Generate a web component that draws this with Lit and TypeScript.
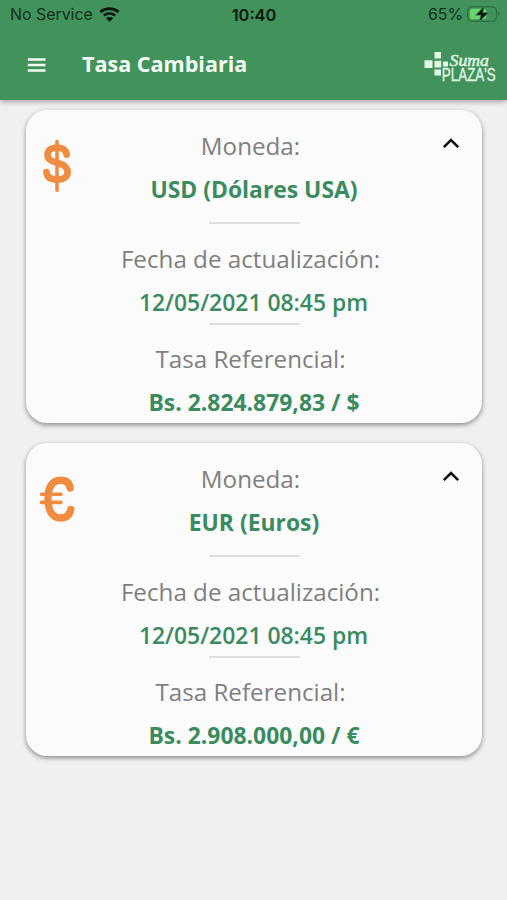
import { LitElement, html, css, svg } from "lit";
import { customElement, property } from "lit/decorators.js";

interface Rate {
  icon: "usd" | "eur";
  currency: string;
  updated: string;
  rate: string;
}

const RATES: Rate[] = [
  { icon: "usd", currency: "USD (Dólares USA)", updated: "12/05/2021 08:45 pm", rate: "Bs. 2.824.879,83 / $" },
  { icon: "eur", currency: "EUR (Euros)", updated: "12/05/2021 08:45 pm", rate: "Bs. 2.908.000,00 / €" },
];

const usdIcon = svg`
  <path d="M18 2.5V51.200" stroke-width="3.600" />
  <path d="M27.700 15.700C27.200 11 23.500 8.600 18.200 8.600C12.200 8.600 8.500 11.400 8.500 15.600C8.500 20.300 12 22 18.200 23.700C24.600 25.400 28.700 27.600 28.700 33C28.700 38 24.400 40.600 18.200 40.600C11.900 40.600 8 38 7.400 33" stroke-width="6.600" />`;
const eurIcon = svg`
  <path d="M31.200 16C30.400 11 27 8.200 21.600 8.200C12.600 8.200 9 16 9 26.800C9 37.600 12.600 46 21.600 46C27.600 46 30.800 42.600 31.800 37.400" stroke-width="7.400" />
  <path d="M2.500 22.300H22M2.500 30.400H22" stroke-width="3.600" />`;

@customElement("status-bar")
export class StatusBar extends LitElement {
  static styles = css`
    :host {
      display: grid;
      grid-template-columns: 1fr auto 1fr;
      align-items: center;
      height: 30px;
      padding: 0 7px 0 10px;
      box-sizing: border-box;
      font: 400 16px/30px Inter, sans-serif;
      color: #10301c;
    }
    .side { display: flex; align-items: center; }
    .left { gap: 6px; }
    .right { justify-content: flex-end; gap: 4px; }
    .carrier { font-size: 15.900px; }
    .time { font-size: 16.400px; font-weight: 600; color: #07170d; margin-left: -2px; }
    .level { font-size: 15.900px; }
    svg { display: block; }
    .wifi { margin-top: -2px; }
    .battery { margin-top: -2px; }
  `;
  render() {
    return html`
      <div class="side left">
        <span class="carrier">No Service</span>
        <svg class="wifi" width="21" height="16" viewBox="0 0 21 16">
          <g fill="none" stroke="#06140b" stroke-width="2.7">
            <path d="M1.400 5.900C6.500 1.400 14.500 1.400 19.600 5.900" />
            <path d="M4.900 9.500C8.200 6.800 12.800 6.800 16.100 9.500" />
          </g>
          <path d="M10.500 15.800L7 12.300C8.900 10.700 12.100 10.700 14 12.300Z" fill="#06140b" />
        </svg>
      </div>
      <span class="time">10:40</span>
      <div class="side right">
        <span class="level">65%</span>
        <svg class="battery" width="33" height="18" viewBox="0 0 33 18">
          <rect x=".7" y="1.700" width="28.800" height="14.600" rx="4.400" fill="none" stroke="#2f7045" stroke-width="1.400" />
          <rect x="2.800" y="3.800" width="16.500" height="10.400" rx="2.500" fill="#67d46a" />
          <path d="M31 6.500C33 7.200 33 10.800 31 11.500Z" fill="#2f7045" />
          <path d="M17.500 1L8.500 10.200H14L12 17L21.500 7.600H15.700Z" fill="#06140b" stroke="#42925b" stroke-width=".7" />
        </svg>
      </div>
    `;
  }
}

@customElement("app-bar")
export class AppBar extends LitElement {
  static styles = css`
    :host {
      display: flex;
      align-items: center;
      height: 70px;
      padding: 0 9px 0 27px;
      box-sizing: border-box;
      color: #f4fcf5;
      font-family: "Open Sans", "Noto Sans", sans-serif;
    }
    svg { display: block; }
    .menu { margin-top: -1px; }
    .title {
      flex: 1;
      margin: -2px 0 0 36px;
      font-size: 21.550px;
      font-weight: 700;
      line-height: 30px;
    }
    .logo { margin-top: 5px; overflow: visible; }
    .suma { font: italic 400 17px "Liberation Serif", serif; }
    .plazas { font: 400 18px "Liberation Sans", sans-serif; }
  `;
  render() {
    return html`
      <svg class="menu" width="19" height="16" viewBox="0 0 19 16">
        <path d="M.800 2.500H18.500M.800 8H18.500M.800 13.500H18.500" stroke="#f4fcf5" stroke-width="2.500" />
      </svg>
      <h1 class="title">Tasa Cambiaria</h1>
      <svg class="logo" width="74" height="36" viewBox="0 0 74 36" fill="#e2f9e8">
        <rect x="10.500" y="2" width="6.500" height="6.500" />
        <rect x=".500" y="10.300" width="8" height="7.700" />
        <rect x="10.500" y="10.800" width="6.700" height="6.700" />
        <rect x="19" y="11.500" width="5" height="5" />
        <rect x="10.500" y="19.500" width="6.500" height="6" />
        <text class="suma" x="25.500" y="16.300" stroke="#e2f9e8" stroke-width=".45" textLength="39.500" lengthAdjust="spacingAndGlyphs">Suma</text>
        <text class="plazas" x="17.800" y="31.300" stroke="#e2f9e8" stroke-width=".3" textLength="54" lengthAdjust="spacingAndGlyphs">PLAZA'S</text>
      </svg>
    `;
  }
}

@customElement("rate-card")
export class RateCard extends LitElement {
  @property({ attribute: false }) rate!: Rate;
  static styles = css`
    :host {
      display: grid;
      grid-template-columns: 62px 1fr 62px;
      height: 312.600px;
      box-sizing: border-box;
      border-radius: 21px;
      background: #fbfbfb;
      box-shadow: 0 2px 5px rgba(0, 0, 0, 0.42);
      font-family: "Open Sans", "Noto Sans", sans-serif;
    }
    svg { display: block; fill: none; stroke-linecap: round; stroke-linejoin: round; }
    .currency { margin: 29px 0 0 13px; stroke: #f08c40; }
    .chevron { margin: 26.500px 0 0 21.500px; stroke: #111; stroke-linecap: butt; stroke-linejoin: miter; }
    .body { display: flex; flex-direction: column; align-items: center; padding-top: 14px; white-space: nowrap; }
    .label { height: 44px; line-height: 44px; font-size: 24.200px; color: #7f7f7f; padding-right: 7px; }
    .value { height: 42px; line-height: 44px; font-size: 22.900px; font-weight: 700; color: #3a8b60; }
    .date { font-weight: 600; padding-right: 1px; }
    .rule { width: 91px; height: 2px; margin: 12px 0 13px; background: #dedede; }
    .tight { margin: 0 0 12px; }
  `;
  render() {
    const r = this.rate;
    return html`
      <svg class="currency" width="36" height="54" viewBox="0 0 36 54">${r.icon === "usd" ? usdIcon : eurIcon}</svg>
      <div class="body">
        <div class="label">Moneda:</div>
        <div class="value">${r.currency}</div>
        <div class="rule"></div>
        <div class="label">Fecha de actualización:</div>
        <div class="value date">${r.updated}</div>
        <div class="rule tight"></div>
        <div class="label">Tasa Referencial:</div>
        <div class="value">${r.rate}</div>
      </div>
      <svg class="chevron" width="18" height="12" viewBox="0 0 18 12">
        <path d="M1.800 10.200L9 3L16.200 10.200" stroke-width="2.600" />
      </svg>
    `;
  }
}

@customElement("app-root")
export class AppRoot extends LitElement {
  static styles = css`
    :host { display: block; height: 900px; background: #f0f0f0; overflow: hidden; }
    .header { height: 100px; background: #42925b; box-shadow: 0 1px 6px rgba(0, 0, 0, 0.4); }
    .cards { display: flex; flex-direction: column; gap: 20.400px; padding: 10.200px 25px 0 26px; }
  `;
  render() {
    return html`
      <header class="header">
        <status-bar></status-bar>
        <app-bar></app-bar>
      </header>
      <main class="cards">${RATES.map((r) => html`<rate-card .rate=${r}></rate-card>`)}</main>
    `;
  }
}
